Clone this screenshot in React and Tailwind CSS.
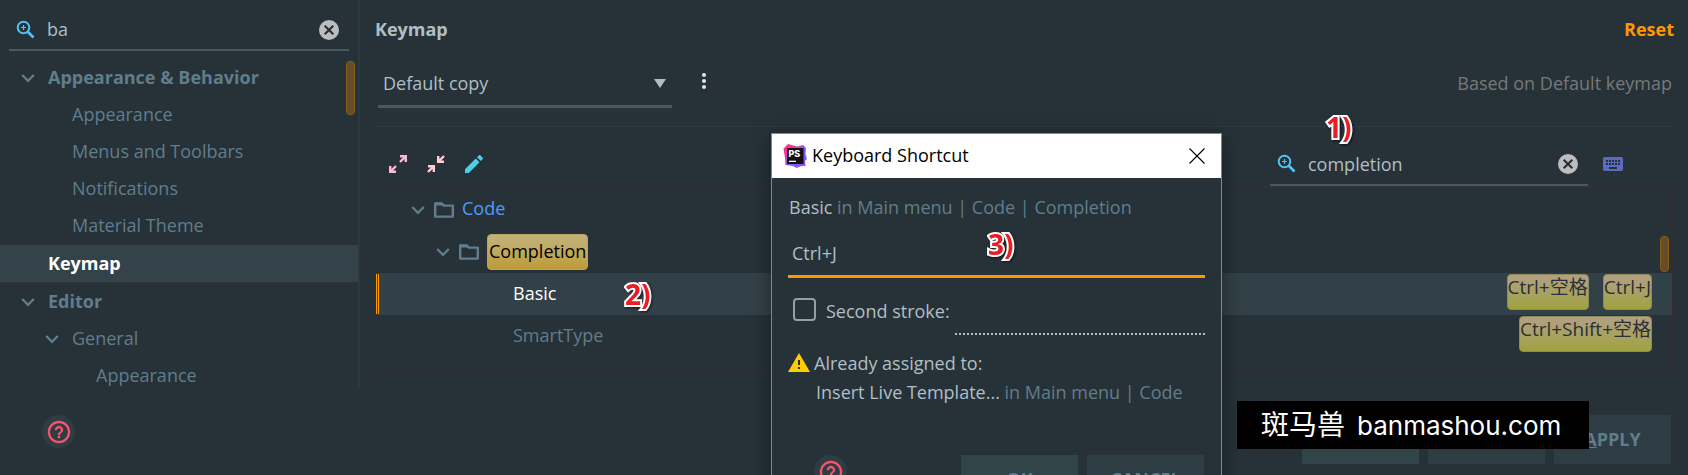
const sans = "font-['Open_Sans','Noto_Sans_CJK_SC',sans-serif]";

const ZoomIcon = () => (
  <svg className="h-5 w-5 shrink-0 text-[#4fc3f7]" viewBox="0 0 20 20" fill="none" stroke="currentColor">
    <circle cx="7.5" cy="7.5" r="5.8" strokeWidth="2" />
    <path d="M7.5 5v5M5 7.5h5" strokeWidth="1.2" />
    <path d="M11.5 11.5l6 6" strokeWidth="2.6" />
  </svg>
);

const ClearButton = () => (
  <button type="button" aria-label="Clear search" className="shrink-0">
    <svg className="h-5 w-5" viewBox="0 0 20 20">
      <circle cx="10" cy="10" r="10" fill="#bdbdbd" />
      <path d="M5.7 5.7l8.6 8.6M14.3 5.7l-8.6 8.6" stroke="#263238" strokeWidth="2.2" />
    </svg>
  </button>
);

const Chevron = () => (
  <svg className="h-4 w-4 shrink-0" viewBox="0 0 16 16" fill="none" stroke="#607d8b" strokeWidth="2.4">
    <path d="M2.2 5L8 10.8 13.8 5" />
  </svg>
);

const Folder = () => (
  <svg className="h-5 w-5 shrink-0" viewBox="0 0 20 20" fill="none" stroke="#607d8b">
    <path d="M1.2 3.4v13.2h17.6V5.6H9.6L7.8 3.4z" strokeWidth="2.4" strokeLinejoin="round" />
    <path d="M1 4h7.5" strokeWidth="3" />
  </svg>
);

const HelpButton = () => (
  <button type="button" aria-label="Help" className="flex h-[33px] w-[33px] items-center justify-center rounded-full bg-[#2e3c43]">
    <svg className="h-6 w-6" viewBox="0 0 24 24" fill="#ff5370" stroke="#ff5370" strokeWidth="0.4">
      <path d="M11 18h2v-2h-2v2zm1-17C5.9 1 1 5.9 1 12s4.9 11 11 11 11-4.9 11-11S18.1 1 12 1zm0 20.1c-5 0-9.1-4.1-9.1-9.1S7 2.9 12 2.9s9.1 4.1 9.1 9.1-4.1 9.1-9.1 9.1zM12 6c-2.2 0-4 1.8-4 4h1.9c0-1.1.9-2.1 2.1-2.1s2.1 1 2.1 2.1c0 2-3 1.8-3 5h1.9c0-2.3 3-2.5 3-5 0-2.2-1.8-4-4-4z" />
    </svg>
  </button>
);

const Logo = () => (
  <svg className="h-6 w-6 shrink-0" viewBox="0 0 24 24">
    <defs>
      <linearGradient id="ps" x1="0" y1="0" x2="1" y2="1">
        <stop offset="0" stopColor="#ff318c" />
        <stop offset="0.28" stopColor="#fb2f9b" />
        <stop offset="0.4" stopColor="#a94cf6" />
        <stop offset="0.6" stopColor="#765af8" />
        <stop offset="1" stopColor="#b345f1" />
      </linearGradient>
    </defs>
    <path d="M.5 4.5L5 0l9 2.5L20 1l3 3-.5 6L24 15l-2 2 .5 5-5 .2L14 24l-5-2.2-6.5-.8L2 14z" fill="url(#ps)" />
    <path d="M4 4h16.500v16H4z" fill="#111" />
    <text x="5.5" y="12.5" fontSize="9" fontWeight="800" fill="#fff" fontFamily="Inter">PS</text>
    <path d="M6 16.7h7v1.3H6z" fill="#fff" />
  </svg>
);

const settings = [
  { label: "Appearance & Behavior", style: "pl-5 font-bold", open: true },
  { label: "Appearance", style: "pl-[72px]" },
  { label: "Menus and Toolbars", style: "pl-[72px]" },
  { label: "Notifications", style: "pl-[72px]" },
  { label: "Material Theme", style: "pl-[72px]" },
  { label: "Keymap", style: "mt-px pl-12 font-bold text-white bg-[#344349]" },
  { label: "Editor", style: "mt-px pl-5 font-bold", open: true },
  { label: "General", style: "pl-11", open: true },
  { label: "Appearance", style: "pl-24" },
];

const Sidebar = () => (
  <aside className="flex w-[360px] shrink-0 flex-col border-r-2 border-[#2a3840]">
    <div className="mx-[9px] flex h-[51px] items-center gap-[11px] border-b-2 border-[#455a64] pt-2.5 pr-2.5 pl-[7px]">
      <ZoomIcon />
      <input aria-label="Search settings" defaultValue="ba" className="min-w-0 flex-1 bg-transparent text-[#b0bec5] outline-none" />
      <ClearButton />
    </div>
    <ul className="relative h-[337px] overflow-hidden pt-2 text-[#607d8b]">
      {settings.map(({ label, style, open }, i) => (
        <li key={i} className={`flex h-[37px] items-center gap-3 ${style}`}>
          {open && <Chevron />}
          {label}
        </li>
      ))}
      <li aria-hidden="true" className="absolute top-2.5 right-[3px] h-[54px] w-[9px] rounded-sm border border-[#8a5c18] bg-[#654e27]" />
    </ul>
  </aside>
);

const Shortcut = ({ children }) => (
  <kbd className={`h-9 rounded border border-[#8d8a5c] bg-linear-to-b from-[#b39f84] to-[#9fa33c] text-[19px] leading-6 text-[#2b3033] ${sans}`}>
    {children}
  </kbd>
);

const KeymapTree = () => (
  <div className="relative mr-px flex h-[187px] flex-col border border-t-2 border-[#352f30] text-[#607d8b]">
    <div className="flex h-[43px] items-center gap-2 pl-[34px]">
      <Chevron />
      <Folder />
      <span className="pb-0.5 text-[#4f9bff]">Code</span>
    </div>
    <div className="flex h-[42px] items-center gap-2 pl-[59px]">
      <Chevron />
      <Folder />
      <span className="h-9 rounded border border-[#b8a463] bg-linear-to-b from-[#c2b37c] to-[#bd9c36] px-px leading-8 text-black">Completion</span>
    </div>
    <div className="flex h-[42px] items-center bg-[#324047] pr-5 text-white">
      <span className="h-10 w-[3px] border-x border-[#ff9800]" />
      <span className="flex-1 pb-0.5 pl-[134px]">Basic</span>
      <span className="flex gap-3.5 pb-1">
        <Shortcut>Ctrl+空格</Shortcut>
        <Shortcut>Ctrl+J</Shortcut>
      </span>
    </div>
    <div className="flex h-[42px] items-center pr-5">
      <span className="flex-1 pb-0.5 pl-[137px]">SmartType</span>
      <span className="flex pb-1">
        <Shortcut>Ctrl+Shift+空格</Shortcut>
      </span>
    </div>
    <span className="absolute top-12 right-[3px] h-9 w-[9px] rounded-sm border border-[#8a5c18] bg-[#654e27]" />
  </div>
);

const KeymapPanel = () => (
  <main className="min-w-0 flex-1 pr-3.5 pl-[15px]">
    <div className="flex h-[51px] items-center justify-between pt-2 font-bold">
      <h1 className="text-[#b0bec5]">Keymap</h1>
      <button type="button" className="text-[#ff9800]">Reset</button>
    </div>
    <div className="flex h-[76px] items-start border-b border-[#2b3a43] pl-[3px]">
      <div className="relative flex w-[294px] border-b-3 border-[#455a64]">
        <select aria-label="Keymap scheme" className="h-[54px] flex-1 appearance-none bg-transparent pt-2.5 pl-[5px] text-[#b0bec5] outline-none">
          <option>Default copy</option>
        </select>
        <svg className="pointer-events-none absolute top-7 right-1.5 h-[9px] w-3" viewBox="0 0 12 9">
          <path d="M0 0h12L6 9z" fill="#b0bec5" />
        </svg>
      </div>
      <button type="button" aria-label="Scheme actions" className="mt-5 ml-6">
        <svg className="h-5 w-4" viewBox="0 0 16 20" fill="#e0e0e0">
          <circle cx="8" cy="4" r="2.1" />
          <circle cx="8" cy="10" r="2.1" />
          <circle cx="8" cy="16" r="2.1" />
        </svg>
      </button>
      <span className="ml-auto flex h-[54px] items-center pt-2.5 pr-0.5 text-[#787878]">Based on Default keymap</span>
    </div>
    <div className="flex h-[59px] items-end">
      <div className="flex gap-5 pb-[13px] pl-3.5">
        <button type="button" aria-label="Expand all">
          <svg className="h-[18px] w-[18px]" viewBox="0 0 18 18" fill="none" stroke="#f8bbd0" strokeWidth="2.4">
            <path d="M11 1.2h5.8V7M16.8 1.2L11 7M7 16.8H1.2V11M1.2 16.8L7 11" />
          </svg>
        </button>
        <button type="button" aria-label="Collapse all">
          <svg className="h-[18px] w-[18px]" viewBox="0 0 18 18" fill="none" stroke="#ffcdd2" strokeWidth="2.4">
            <path d="M11.2 1v5.800H17M11.2 6.8L17 1M1 11.2h5.800V17M6.8 11.2L1 17" />
          </svg>
        </button>
        <button type="button" aria-label="Edit shortcut">
          <svg className="h-[18px] w-[18px]" viewBox="0 0 18 18" fill="#4dd0e1">
            <path d="M0 14.2V18h3.8L14.5 7.3 10.7 3.5zM17.7 4.1a1 1 0 000-1.4L15.3.3a1 1 0 00-1.4 0L12 2.2 15.8 6z" />
          </svg>
        </button>
      </div>
      <div className="ml-auto flex h-12 w-[318px] items-center gap-[11px] border-b-2 border-[#455a64] pt-1.5 pr-2.5 pl-[7px]">
        <ZoomIcon />
        <input aria-label="Search actions" defaultValue="completion" className="min-w-0 flex-1 bg-transparent text-[#b0bec5] outline-none" />
        <ClearButton />
      </div>
      <button type="button" aria-label="Find by shortcut" className="mr-[51px] mb-[15px] ml-[15px]">
        <svg className="h-3.5 w-5" viewBox="0 0 20 14">
          <rect width="20" height="14" rx="2" fill="#5c6bc0" />
          <path d="M3 4h14M3 7h14" stroke="#263238" strokeWidth="2" strokeDasharray="2 1" />
          <path d="M6 11h8" stroke="#263238" strokeWidth="2" />
        </svg>
      </button>
    </div>
    <KeymapTree />
  </main>
);

const DialogButton = ({ primary, children }) => (
  <button type="button" className={`h-[49px] w-[117px] font-bold text-[#607d8b] ${primary ? "bg-[#314549]" : "bg-[#2e3c43]"}`}>
    {children}
  </button>
);

const ShortcutDialog = () => (
  <section role="dialog" aria-label="Keyboard Shortcut" className="absolute top-[133px] left-[771px] w-[451px] border border-[#1fb0bd] bg-[#263238] text-[#b0bec5] shadow-[0_4px_20px_rgba(0,0,0,0.4)]">
    <header className="flex h-11 items-center bg-white pr-4 pl-[11px] text-black">
      <Logo />
      <h2 className="flex-1 pb-0.5 pl-[5px]">Keyboard Shortcut</h2>
      <button type="button" aria-label="Close">
        <svg className="h-4 w-4" viewBox="0 0 16 16" stroke="#000" strokeWidth="1.1">
          <path d="M.5.5l15 15M15.5.5l-15 15" />
        </svg>
      </button>
    </header>
    <div className="px-4">
      <p className="pt-[15px] pl-px leading-7">
        Basic <span className="text-[#607d8b]">in Main menu | Code | Completion</span>
      </p>
      <input aria-label="First stroke" defaultValue="Ctrl+J" className="mt-[11px] h-[46px] w-full border-b-3 border-[#ff9800] bg-transparent pb-0.5 pl-1 outline-none" />
      <div className="flex h-[57px] items-start">
        <input id="second" type="checkbox" className="mt-5 ml-[5px] h-[23px] w-[23px] shrink-0 appearance-none rounded-sm border-2 border-[#90a0a8]" />
        <label htmlFor="second" className="pt-[19px] pl-2.5 leading-7 whitespace-nowrap">Second stroke:</label>
        <input aria-label="Second stroke keys" className="ml-auto h-[57px] w-[250px] border-b-2 border-dotted border-[#b0bec5] bg-transparent outline-none" />
      </div>
      <div className="flex items-center gap-1 pt-3.5">
        <svg className="h-5 w-[22px]" viewBox="0 0 22 20">
          <path d="M11 0l11 19H0z" fill="#ffcc00" />
          <path d="M10 7h2v5h-2zM10 14h2v2h-2z" fill="#263238" />
        </svg>
        <span className="leading-7">Already assigned to:</span>
      </div>
      <p className="pl-7 leading-[30px]">
        Insert Live Template... <span className="text-[#607d8b]">in Main menu | Code</span>
      </p>
    </div>
    <footer className="flex gap-[9px] pt-12 pr-[17px] pb-5 pl-[42px]">
      <HelpButton />
      <span className="flex-1" />
      <DialogButton primary>OK</DialogButton>
      <DialogButton>CANCEL</DialogButton>
    </footer>
  </section>
);

const Marker = ({ place, children }) => (
  <span
    className={`absolute text-[28px] leading-8 font-bold text-[#ed1c24] [-webkit-text-stroke:4px_white] [paint-order:stroke_fill] drop-shadow-[1px_1px_1px_rgba(0,0,0,0.6)] ${place}`}
  >
    {children}
  </span>
);

export default function App() {
  return (
    <div className={`relative h-screen overflow-hidden bg-[#263238] text-[18px] ${sans}`}>
      <div className="flex">
        <Sidebar />
        <KeymapPanel />
      </div>
      <footer className="flex items-start justify-between pt-[27px] pr-[17px] pl-[42px]">
        <HelpButton />
        <div className="flex gap-[9px]">
          <DialogButton primary>OK</DialogButton>
          <DialogButton>CANCEL</DialogButton>
          <DialogButton><u>A</u>PPLY</DialogButton>
        </div>
      </footer>
      <ShortcutDialog />
      <Marker place="top-[111px] left-[1326px]">1)</Marker>
      <Marker place="top-[278px] left-[625px]">2)</Marker>
      <Marker place="top-[228px] left-[988px]">3)</Marker>
      <div className="absolute top-[401px] right-[99px] flex h-12 w-[352px] items-center gap-3 bg-black pl-6 font-['Inter','Noto_Sans_CJK_SC',sans-serif] text-[26px] text-white">
        <span className="text-[28px]">斑马兽</span>
        <span>banmashou.com</span>
      </div>
    </div>
  );
}
